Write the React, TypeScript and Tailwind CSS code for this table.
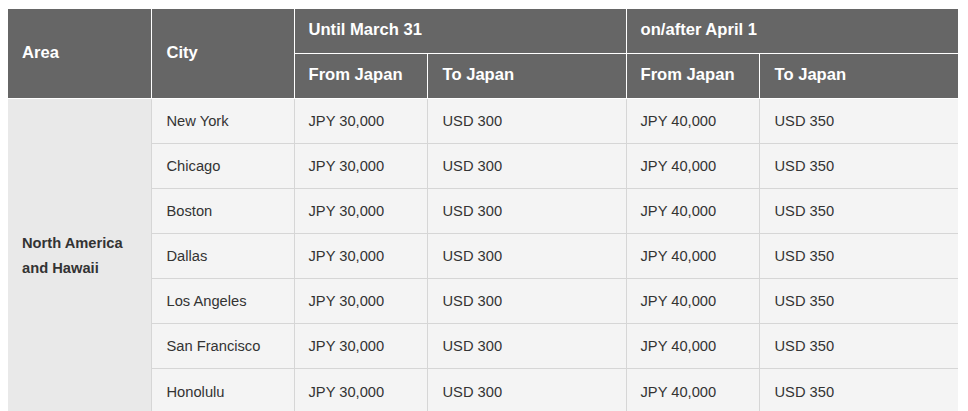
const rows = [
  "New York",
  "Chicago",
  "Boston",
  "Dallas",
  "Los Angeles",
  "San Francisco",
  "Honolulu",
];

export default function App() {
  return (
    <main className="min-h-screen bg-white pt-[9px] px-[8px] font-['Liberation_Sans',Arial,sans-serif]">
      <table className="w-[950px] table-fixed border-collapse border-hidden text-left">
        <colgroup>
          <col className="w-[143px]" />
          <col className="w-[143px]" />
          <col className="w-[133px]" />
          <col className="w-[199px]" />
          <col className="w-[133px]" />
          <col className="w-[199px]" />
        </colgroup>
        <thead className="bg-[#666666] text-white text-[16.6px] font-bold">
          <tr className="h-[44px]">
            <th rowSpan={2} className="border border-white pl-[14px] align-middle">Area</th>
            <th rowSpan={2} className="border border-white pl-[15px] align-middle">City</th>
            <th colSpan={2} className="border border-white pl-[14px] align-middle">Until March 31</th>
            <th colSpan={2} className="border border-white pl-[14px] align-middle">on/after April 1</th>
          </tr>
          <tr className="h-[45px]">
            <th className="border border-white pl-[14px]">From Japan</th>
            <th className="border border-white pl-[15px]">To Japan</th>
            <th className="border border-white pl-[14px]">From Japan</th>
            <th className="border border-white pl-[15px]">To Japan</th>
          </tr>
        </thead>
        <tbody className="text-[14.7px] text-[#333333]">
          {rows.map((city, i) => (
            <tr key={city} className="h-[45px] bg-[#f4f4f4]">
              {i === 0 && (
                <td
                  rowSpan={rows.length}
                  className="border border-[#d6d6d6] bg-[#e9e9e9] pl-[14px] font-bold leading-[25px] align-middle"
                >
                  North America
                  <br />
                  and Hawaii
                </td>
              )}
              <td className="border border-[#d6d6d6] pl-[15px] pt-[2px]">{city}</td>
              <td className="border border-[#d6d6d6] pl-[14px] pt-[2px]">JPY 30,000</td>
              <td className="border border-[#d6d6d6] pl-[15px] pt-[2px]">USD 300</td>
              <td className="border border-[#d6d6d6] pl-[14px] pt-[2px]">JPY 40,000</td>
              <td className="border border-[#d6d6d6] pl-[15px] pt-[2px]">USD 350</td>
            </tr>
          ))}
        </tbody>
      </table>
    </main>
  );
}
